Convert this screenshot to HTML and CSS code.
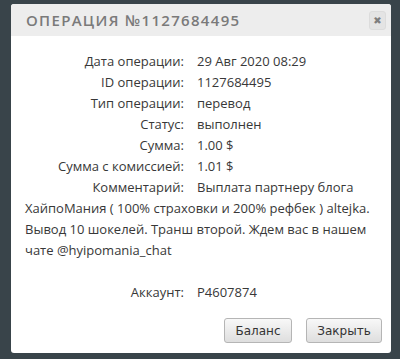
FILE: index.html
```html
<!DOCTYPE html>
<html lang="ru">
<head>
    <meta charset="UTF-8">
    <meta name="viewport" content="width=device-width, initial-scale=1.0">
    <title>Операция №1127684495</title>
    <link rel="stylesheet" href="styles.css">
</head>
<body>
    <div class="dialog">
        <div class="dialog-header">
            <span class="dialog-title">Операция №1127684495</span>
            <button class="close-btn">&#x2716;</button>
        </div>
        <div class="dialog-body">
            <div class="row"><span class="row-label">Дата операции:</span>29 Авг 2020 08:29</div>
            <div class="row"><span class="row-label">ID операции:</span>1127684495</div>
            <div class="row"><span class="row-label">Тип операции:</span>перевод</div>
            <div class="row"><span class="row-label">Статус:</span>выполнен</div>
            <div class="row"><span class="row-label">Сумма:</span>1.00 $</div>
            <div class="row"><span class="row-label">Сумма с комиссией:</span>1.01 $</div>
            <div class="row"><span class="row-label">Комментарий:</span>Выплата партнеру блога ХайпоМания ( 100% страховки и 200% рефбек ) altejka. Вывод 10 шокелей. Транш второй. Ждем вас в нашем чате @hyipomania_chat</div>
            <div class="row account"><span class="row-label">Аккаунт:</span>P4607874</div>
        </div>
        <div class="dialog-buttons">
            <button class="btn btn-balance">Баланс</button>
            <button class="btn btn-close">Закрыть</button>
        </div>
    </div>
</body>
</html>
```

FILE: styles.css
```css
body {
    margin: 0;
    padding: 4px 9px 5px 11px;
    background-color: #39444a;
    font-family: "Open Sans", sans-serif;
}
.dialog {
    background: white;
    border-radius: 3px;
    width: 380px;
    height: 349px;
    display: flex;
    flex-direction: column;
}
.dialog-header {
    background-color: #ededed;
    height: 32px;
    display: flex;
    align-items: center;
    justify-content: space-between;
    padding: 0 5px 0 15px;
    border-radius: 3px 3px 0 0;
}
.dialog-title {
    text-transform: uppercase;
    color: #7a7a7a;
    font-size: 15px;
    font-weight: 600;
    letter-spacing: 1.3px;
}
.close-btn {
    width: 17px;
    height: 19px;
    padding: 0;
    border: 1px solid #dcdcdc;
    border-radius: 3px;
    background: #e4e4e4;
    color: #7e7e7e;
    font-size: 10px;
    line-height: 17px;
    font-family: "DejaVu Sans", sans-serif;
}
.dialog-body {
    padding: 15px 14px 0 14px;
    color: #383838;
    font-size: 13px;
    line-height: 21px;
}
.row-label {
    display: inline-block;
    width: 159px;
    margin-right: 13px;
    text-align: right;
}
.account {
    margin-top: 21px;
}
.dialog-buttons {
    margin-top: auto;
    display: flex;
    justify-content: flex-end;
    gap: 14px;
    padding: 0 9px 10px 0;
}
.btn {
    height: 25px;
    padding: 0;
    border: 1px solid #b5b5b5;
    border-radius: 3px;
    background: linear-gradient(#f8f8f8, #dedede);
    color: #333;
    font-family: "DejaVu Sans", sans-serif;
    font-size: 12px;
}
.btn-balance {
    width: 68px;
}
.btn-close {
    width: 76px;
}
```
